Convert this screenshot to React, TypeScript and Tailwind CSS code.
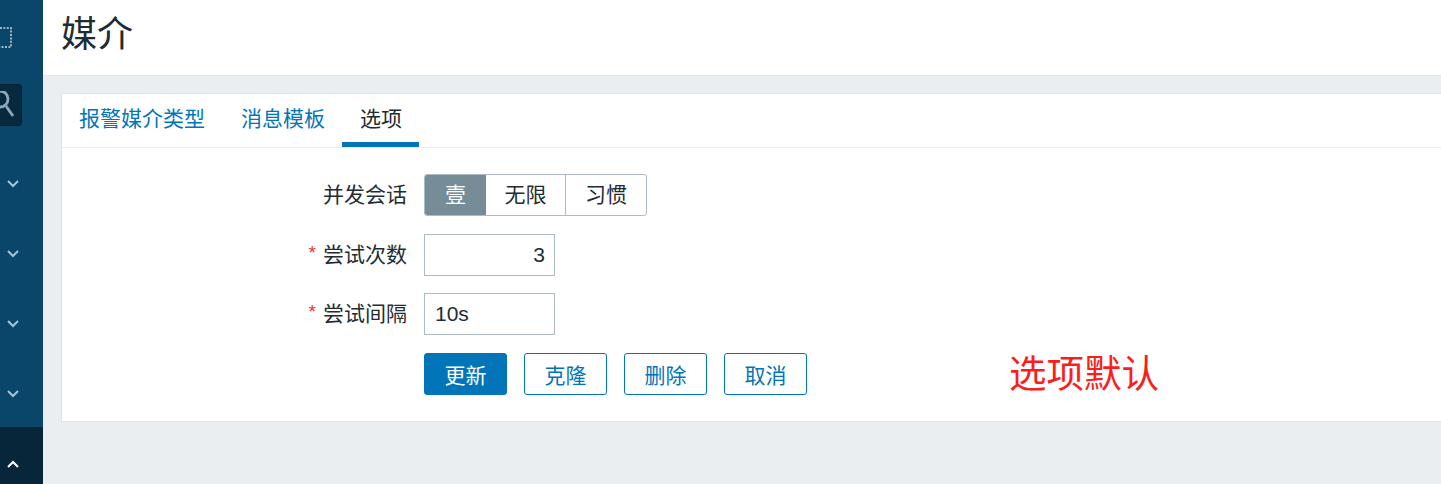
import React from "react";

const cjk = '"Liberation Sans","Noto Sans CJK SC",sans-serif';

function Chevron({ up, color }: { up?: boolean; color: string }) {
  return (
    <svg width="12" height="8" viewBox="0 0 12 8" fill="none" stroke={color} strokeWidth="2">
      <path d={up ? "M1 7 L6 2 L11 7" : "M1 1 L6 6 L11 1"} />
    </svg>
  );
}

function Field({ label, required, children, className }: { label: string; required?: boolean; children: React.ReactNode; className?: string }) {
  return (
    <div className={"flex items-center h-[42px] " + (className ?? "")}>
      <div className="w-[345px] flex justify-end items-center text-[21px] text-[#1f2c33]">
        {required && <span className="text-[#e33734] text-[19px] mr-[7px] -mt-[4px]">*</span>}
        <span>{label}</span>
      </div>
      <div className="ml-[17px]">{children}</div>
    </div>
  );
}

function Btn({ children, primary }: { children: React.ReactNode; primary?: boolean }) {
  return (
    <div
      className={
        "w-[83px] h-[42px] flex items-center justify-center rounded-[3px] border border-[#0275b8] text-[21px] pt-[3px] " +
        (primary ? "bg-[#0275b8] text-white" : "bg-white text-[#0275b8]")
      }
    >
      {children}
    </div>
  );
}

export default function App() {
  return (
    <div className="flex w-[1441px] h-[484px] overflow-hidden bg-[#ebeef0]" style={{ fontFamily: cjk }}>
      <aside className="w-[43px] shrink-0 bg-[#0a466a] flex flex-col overflow-hidden">
        <div className="h-[84px] pt-[27px]">
          <svg width="14" height="22" viewBox="0 0 14 22" fill="none" stroke="#9fb5c4" strokeWidth="2" strokeDasharray="2 1.4">
            <path d="M0 1 H11 V20 H0" />
          </svg>
        </div>
        <div className="w-[22px] h-[42px] rounded-r-[4px] bg-[#07293d] border border-l-0 border-[#042033] flex items-center justify-end overflow-hidden">
          <svg width="22" height="28" viewBox="0 0 22 28" fill="none" stroke="#8fa9ba" strokeWidth="2.8" className="shrink-0">
            <circle cx="1" cy="8" r="8" />
            <path d="M7 15 L14 25" />
          </svg>
        </div>
        <div className="h-[301px] flex flex-col">
          <div className="h-[23px]" />
          <div className="h-[70px] flex items-center justify-center pr-[17px]"><Chevron color="#a9c3d3" /></div>
          <div className="h-[70px] flex items-center justify-center pr-[17px]"><Chevron color="#a9c3d3" /></div>
          <div className="h-[70px] flex items-center justify-center pr-[17px]"><Chevron color="#a9c3d3" /></div>
          <div className="h-[68px] flex items-center justify-center pr-[17px] pt-[2px]"><Chevron color="#a9c3d3" /></div>
        </div>
        <div className="flex-1 bg-[#07263a] flex items-center justify-center pr-[17px] pt-[17px]">
          <Chevron up color="#ffffff" />
        </div>
      </aside>
      <main className="flex-1 min-w-0 flex flex-col">
        <header className="h-[76px] shrink-0 bg-white border-b border-[#dfe4e7] pl-[18px] flex items-center">
          <h1 className="text-[36px] text-[#1f2c33] leading-none -mt-[6px]">媒介</h1>
        </header>
        <section className="ml-[18px] mt-[17px] h-[329px] bg-white border border-[#dfe4e7] border-r-0">
          <nav className="h-[54px] border-b border-[#ebeef0] flex text-[21px]">
            <div className="pl-[17px] pr-[18px] pb-[3px] flex items-center text-[#0275b8]">报警媒介类型</div>
            <div className="pl-[18px] pr-[17px] pb-[3px] flex items-center text-[#0275b8]">消息模板</div>
            <div className="pl-[18px] pr-[17px] pt-[2px] flex items-center text-[#1f2c33] border-b-[5px] border-[#0275b8]">选项</div>
          </nav>
          <div className="pt-[26px] flex flex-col">
            <Field label="并发会话">
              <div className="flex h-[42px] w-[223px] border border-[#acbbc4] rounded-[3px] overflow-hidden text-[21px] text-[#1f2c33]">
                <div className="w-[61px] bg-[#768d99] text-white flex items-center justify-center">壹</div>
                <div className="w-[80px] border-r border-[#acbbc4] flex items-center justify-center">无限</div>
                <div className="flex-1 flex items-center justify-center">习惯</div>
              </div>
            </Field>
            <Field label="尝试次数" required className="mt-[18px]">
              <div className="w-[131px] h-[42px] border border-[#acbbc4] flex items-center justify-end pr-[9px] text-[21px] text-[#1f2c33]">3</div>
            </Field>
            <Field label="尝试间隔" required className="mt-[17px]">
              <div className="w-[131px] h-[42px] border border-[#acbbc4] flex items-center pl-[10px] text-[21px] text-[#1f2c33]">10s</div>
            </Field>
            <div className="flex items-center ml-[362px] gap-[17px] mt-[18px]">
              <Btn primary>更新</Btn>
              <Btn>克隆</Btn>
              <Btn>删除</Btn>
              <Btn>取消</Btn>
              <span className="ml-[185px] text-[37.5px] leading-none text-[#fa1e1e] mt-[2px]">选项默认</span>
            </div>
          </div>
        </section>
      </main>
    </div>
  );
}
